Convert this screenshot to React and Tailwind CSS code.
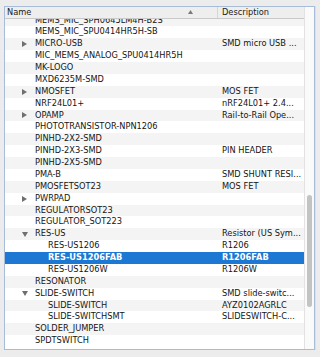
import React from "react";

const rows = [
  { name: "MEMS_MIC_SPH0645LM4H-B2S", desc: "" },
  { name: "MEMS_MIC_SPU0414HR5H-SB", desc: "" },
  { name: "MICRO-USB", desc: "SMD micro USB ...", tri: "r" },
  { name: "MIC_MEMS_ANALOG_SPU0414HR5H", desc: "" },
  { name: "MK-LOGO", desc: "" },
  { name: "MXD6235M-SMD", desc: "" },
  { name: "NMOSFET", desc: "MOS FET", tri: "r" },
  { name: "NRF24L01+", desc: "nRF24L01+ 2.4..." },
  { name: "OPAMP", desc: "Rail-to-Rail Ope...", tri: "r" },
  { name: "PHOTOTRANSISTOR-NPN1206", desc: "" },
  { name: "PINHD-2X2-SMD", desc: "" },
  { name: "PINHD-2X3-SMD", desc: "PIN HEADER" },
  { name: "PINHD-2X5-SMD", desc: "" },
  { name: "PMA-B", desc: "SMD SHUNT RESI..." },
  { name: "PMOSFETSOT23", desc: "MOS FET" },
  { name: "PWRPAD", desc: "", tri: "r" },
  { name: "REGULATORSOT23", desc: "" },
  { name: "REGULATOR_SOT223", desc: "" },
  { name: "RES-US", desc: "Resistor (US Sym...", tri: "d" },
  { name: "RES-US1206", desc: "R1206", child: true },
  { name: "RES-US1206FAB", desc: "R1206FAB", child: true, sel: true },
  { name: "RES-US1206W", desc: "R1206W", child: true },
  { name: "RESONATOR", desc: "" },
  { name: "SLIDE-SWITCH", desc: "SMD slide-switc...", tri: "d" },
  { name: "SLIDE-SWITCH", desc: "AYZ0102AGRLC", child: true },
  { name: "SLIDE-SWITCHSMT", desc: "SLIDESWITCH-C...", child: true },
  { name: "SOLDER_JUMPER", desc: "" },
  { name: "SPDTSWITCH", desc: "" },
];

function Tri({ kind }) {
  if (kind === "r")
    return (
      <svg width="5" height="6" viewBox="0 0 5 6">
        <path d="M0 0 L5 3 L0 6 Z" fill="#6f6f6f" />
      </svg>
    );
  if (kind === "d")
    return (
      <svg width="6" height="5" viewBox="0 0 6 5">
        <path d="M0 0 L6 0 L3 5 Z" fill="#6f6f6f" />
      </svg>
    );
  return null;
}

export default function App() {
  return (
    <div
      className="w-[320px] h-[357px] bg-[#ececec] overflow-hidden pt-[6px] pl-[4px]"
      style={{ fontFamily: '"DejaVu Sans", "Liberation Sans", sans-serif' }}
    >
      <div className="w-[311px] h-[344px] border border-[#a7bcd8] shadow-[1px_0_0_0_#d3e1f2] bg-white flex overflow-hidden">
        <div className="w-[299px] flex flex-col">
          <div className="h-[12px] bg-[#eeeeee] border-b border-[#cacaca] flex text-[8.25px] leading-[11px] text-[#1a1a1a]">
            <div className="w-[213px] pl-[2px] flex items-center border-r border-[#d6d6d6] relative">
              <span>Name</span>
              <span className="absolute left-[183px] top-[3px]">
                <svg width="5" height="4" viewBox="0 0 5 4">
                  <path d="M2.5 0 L5 4 L0 4 Z" fill="#7a7a7a" />
                </svg>
              </span>
            </div>
            <div className="flex-1 pl-[4px] flex items-center">Description</div>
          </div>
          <div className="flex-1 overflow-hidden">
            <div className="mt-[-4.5px]">
              {rows.map((r, i) => (
                <div
                  key={i}
                  className={
                    "flex h-[11.875px] leading-[11.875px] text-[8.25px] whitespace-nowrap " +
                    (r.sel
                      ? "bg-[#1c78d2] text-white font-bold"
                      : i % 2 === 0
                      ? "bg-[#f4f4f4] text-[#141414]"
                      : "bg-white text-[#141414]")
                  }
                >
                  <div className="w-[213px] flex items-center overflow-hidden">
                    <div className="w-[17px] shrink-0" />
                    {r.child && <div className="w-[13px] shrink-0" />}
                    <div className="w-[13px] shrink-0 flex items-center">
                      <Tri kind={r.tri} />
                    </div>
                    <span>{r.name}</span>
                  </div>
                  <div className="flex-1 pl-[4px] overflow-hidden">{r.desc}</div>
                </div>
              ))}
            </div>
          </div>
        </div>
        <div className="w-[10px] border-l border-[#e2e2e2] bg-[#fafafa] pt-[188px] flex justify-center">
          <div className="w-[5px] h-[112px] rounded-full bg-[#c3c3c3]" />
        </div>
      </div>
    </div>
  );
}
